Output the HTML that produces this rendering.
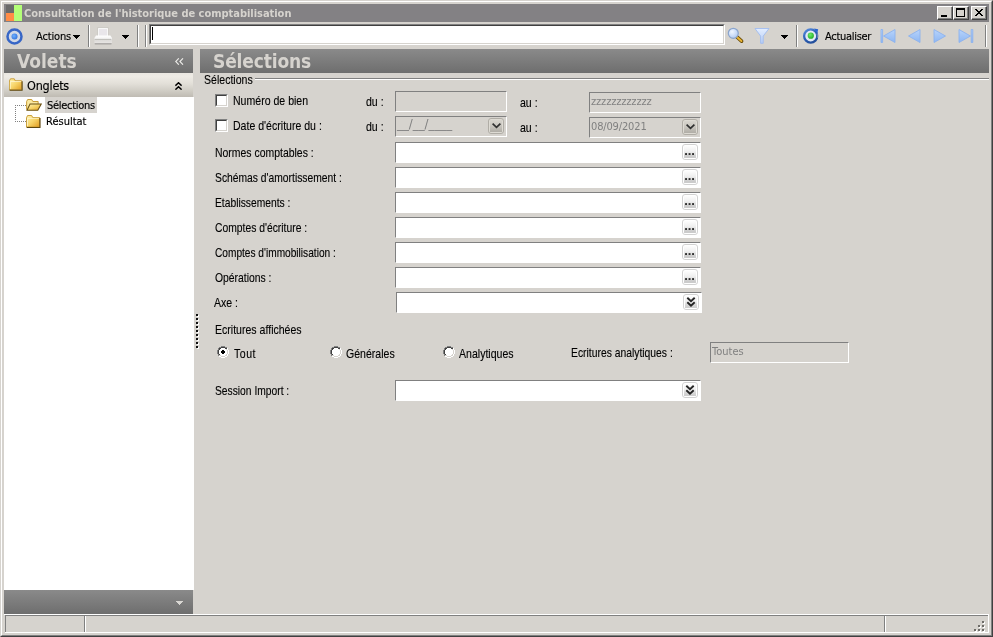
<!DOCTYPE html>
<html lang="fr">
<head>
<meta charset="utf-8">
<title>Consultation de l'historique de comptabilisation</title>
<style>
html,body{margin:0;padding:0;}
body{width:993px;height:637px;overflow:hidden;background:#d6d3ce;position:relative;
  font-family:"Liberation Sans",sans-serif;font-size:11px;color:#000;}
.abs,#win *{position:absolute;box-sizing:border-box;}
#win{will-change:transform;position:absolute;left:0;top:0;width:993px;height:637px;overflow:hidden;background:#d6d3ce;}
.tah{font-family:"DejaVu Sans Condensed","DejaVu Sans","Liberation Sans",sans-serif;}
.t{white-space:nowrap;line-height:13px;height:13px;}
.lbl{white-space:nowrap;line-height:14px;height:14px;font-size:12.4px;transform-origin:0 0;transform:scaleX(var(--sx,0.852));}
.sep{width:2px;border-left:1px solid #808080;border-right:1px solid #fff;}
.box{border:1px solid;border-color:#808080 #fff #fff #808080;background:#fff;}
.box.dis{background:#d6d3ce;}
.gray{color:#808080;}
.k{-webkit-text-stroke:0.15px #000;}
.lbl{-webkit-text-stroke:0.12px #000;}
.chk{width:13px;height:13px;background:#fff;border:1px solid;border-color:#808080 #fff #fff #808080;}
.chk i{left:0;top:0;width:11px;height:11px;border:1px solid;border-color:#404040 #d6d3ce #d6d3ce #404040;}
.wb{width:16px;height:14px;background:#d6d3ce;border:1px solid;border-color:#fff #404040 #404040 #fff;box-shadow:inset -1px -1px 0 #808080;}
</style>
</head>
<body>
<div id="win">
<svg width="0" height="0" style="left:0;top:0;">
<defs>
<linearGradient id="gb" x1="0" y1="0" x2="0" y2="1"><stop offset="0" stop-color="#fdfdfd"/><stop offset="0.45" stop-color="#efefef"/><stop offset="0.75" stop-color="#d6d6d6"/><stop offset="1" stop-color="#cdcdcd"/></linearGradient>
<linearGradient id="gd" x1="0" y1="0" x2="0" y2="1"><stop offset="0" stop-color="#d8d5ce"/><stop offset="0.5" stop-color="#c8c5be"/><stop offset="1" stop-color="#b0ada6"/></linearGradient>
<linearGradient id="gf" x1="0" y1="0" x2="1" y2="1"><stop offset="0" stop-color="#fff3b4"/><stop offset="0.5" stop-color="#f7d468"/><stop offset="1" stop-color="#e09c22"/></linearGradient>
<symbol id="bdots" viewBox="0 0 16 16"><rect x="0.5" y="0.5" width="15" height="15" rx="2.5" fill="#fff" stroke="#d2d2d2"/><rect x="2" y="2" width="12" height="12" fill="url(#gb)"/><rect x="3.1" y="9.1" width="1.9" height="1.9" fill="#2e2e2e"/><rect x="6.6" y="9.1" width="1.9" height="1.9" fill="#2e2e2e"/><rect x="10.1" y="9.1" width="1.9" height="1.9" fill="#2e2e2e"/><rect x="2.5" y="11.5" width="11" height="2" fill="#c6c6c6" opacity="0.6"/></symbol>
<symbol id="bdbl" viewBox="0 0 16 16"><rect x="0.5" y="0.5" width="15" height="15" rx="2.5" fill="#fff" stroke="#d2d2d2"/><rect x="2" y="2" width="12" height="12" fill="url(#gb)"/><path d="M4.3 3.8L8 7.3L11.7 3.8M4.3 8.3L8 11.8L11.7 8.3" fill="none" stroke="#242424" stroke-width="1.9"/></symbol>
<symbol id="bchev" viewBox="0 0 16 16"><rect x="0.5" y="0.5" width="15" height="15" rx="2.5" fill="#dedbd4" stroke="#b0ada6"/><rect x="2" y="2" width="12" height="12" fill="url(#gd)"/><path d="M4.6 5.6L8.5 9.4L12.4 5.6" fill="none" stroke="#303030" stroke-width="1.7"/></symbol>
<symbol id="fclosed" viewBox="0 0 16 14"><path d="M0.5 13v-10.2l1.2-2.3h4.3l1.2 2.3h7.3v10.2z" fill="url(#gf)" stroke="#c39428"/><path d="M15 3.2v10.3h-14.3" fill="none" stroke="#5e4710" stroke-width="1.2"/><path d="M1.5 3.6h12.5M1.5 3.6v8.5" stroke="#fffbe0" stroke-width="0.9" fill="none" opacity="0.9"/></symbol>
<symbol id="fopen" viewBox="0 0 17 13"><path d="M0.5 11.5v-8.8l1.2-2.2h4.3l1.2 2.2h5.8v2.6" fill="#fbe9a0" stroke="#c39428"/><path d="M0.9 12.2L4.2 5.5h12.1L12.6 12.2z" fill="url(#gf)" stroke="#6a5012" stroke-width="1.1"/></symbol>
<symbol id="radio" viewBox="0 0 12 12"><path fill="#808080" d="M4 0h4v1h-4zM2 1h2v1h-2zM8 1h2v1h-2zM1 2h1v1h-1zM1 3h1v1h-1zM0 4h1v1h-1zM0 5h1v1h-1zM0 6h1v1h-1zM0 7h1v1h-1zM1 8h1v1h-1zM1 9h1v1h-1z"/><path fill="#404040" d="M4 1h4v1h-4zM2 2h2v1h-2zM8 2h2v1h-2zM2 3h1v1h-1zM1 4h1v1h-1zM1 5h1v1h-1zM1 6h1v1h-1zM1 7h1v1h-1zM2 8h1v1h-1z"/><path fill="#fff" d="M4 2h4v1h-4zM3 3h6v1h-6zM2 4h8v1h-8zM2 5h8v1h-8zM2 6h8v1h-8zM2 7h8v1h-8zM3 8h6v1h-6zM4 9h4v1h-4z"/><path fill="#fff" d="M10 2h1v1h-1zM10 3h1v1h-1zM11 4h1v1h-1zM11 5h1v1h-1zM11 6h1v1h-1zM11 7h1v1h-1zM10 8h1v1h-1zM10 9h1v1h-1zM2 10h2v1h-2zM8 10h2v1h-2zM4 11h4v1h-4z"/><path fill="#d6d3ce" d="M9 3h1v1h-1zM10 4h1v1h-1zM10 5h1v1h-1zM10 6h1v1h-1zM10 7h1v1h-1zM9 8h1v1h-1zM2 9h2v1h-2zM8 9h2v1h-2zM4 10h4v1h-4z"/></symbol>
<symbol id="rdot" viewBox="0 0 12 12"><path fill="#000" d="M5 4h2v1h1v2h-1v1h-2v-1h-1v-2h1z"/></symbol>
</defs></svg>
<!-- window frame -->
<div style="left:0;top:0;width:993px;height:637px;border:1px solid;border-color:#d6d3ce #404040 #404040 #d6d3ce;"></div>
<div style="left:1px;top:1px;width:991px;height:635px;border:1px solid;border-color:#fff #808080 #808080 #fff;"></div>

<!-- title bar -->
<div id="title" style="left:4px;top:4px;width:985px;height:18px;background:#838184;"></div>
<div style="left:6px;top:5px;width:8px;height:8px;background:#6a6a6a;"></div>
<div style="left:6px;top:13px;width:8px;height:8px;background:#ff8c46;"></div>
<div style="left:14px;top:5px;width:8px;height:16px;background:#b4ff78;"></div>
<div class="t tah" style="left:24px;top:7px;font-weight:bold;font-size:11px;letter-spacing:-0.03px;color:#d6d3ce;">Consultation de l'historique de comptabilisation</div>

<!-- window buttons -->
<div class="wb" style="left:937px;top:6px;"><b style="left:3px;top:8px;width:6px;height:2px;background:#000;"></b></div>
<div class="wb" style="left:953px;top:6px;"><b style="left:2px;top:1px;width:9px;height:9px;border:1px solid #000;border-top-width:2px;"></b></div>
<div class="wb" style="left:971px;top:6px;"><svg style="left:3px;top:2px;" width="8" height="7" viewBox="0 0 8 7" shape-rendering="crispEdges"><path d="M0 0h2v1h1v1h2v-1h1v-1h2v1h-1v1h-1v1h-1v1h1v1h1v1h1v1h-2v-1h-1v-1h-2v1h-1v1h-2v-1h1v-1h1v-1h1v-1h-1v-1h-1v-1h-1z" fill="#000"/></svg></div>

<!-- toolbar -->
<div id="toolbar" style="left:4px;top:23px;width:985px;height:26px;background:#d6d3ce;"></div>
<svg style="left:6px;top:28px;" width="17" height="17" viewBox="0 0 17 17">
  <defs><radialGradient id="g1" cx="0.4" cy="0.4" r="0.7"><stop offset="0" stop-color="#6fb0ff"/><stop offset="1" stop-color="#2f6fd8"/></radialGradient></defs>
  <circle cx="8.5" cy="8.5" r="7" fill="#d2d9e6" stroke="#3766c6" stroke-width="2.5"/>
  <circle cx="8.5" cy="8.5" r="3" fill="url(#g1)"/>
</svg>
<div class="t tah k" style="left:36px;top:30px;letter-spacing:-0.15px;">Actions</div>
<svg class="arr" style="left:73px;top:35px;" width="7" height="4" viewBox="0 0 7 4" shape-rendering="crispEdges"><path d="M0 0h7v1h-1v1h-1v1h-1v1h-1v-1h-1v-1h-1v-1h-1z" fill="#000"/></svg>
<div class="sep" style="left:88px;top:25px;height:22px;"></div>
<!-- printer (disabled) -->
<svg style="left:93px;top:27px;" width="20" height="18" viewBox="0 0 20 18">
  <defs><linearGradient id="gp" x1="0" y1="0" x2="0" y2="1"><stop offset="0" stop-color="#ffffff"/><stop offset="0.45" stop-color="#f1f0ef"/><stop offset="0.6" stop-color="#dddbd9"/><stop offset="0.85" stop-color="#e6e4e2"/><stop offset="1" stop-color="#b9b7b4"/></linearGradient></defs>
  <rect x="5.5" y="1.5" width="9" height="8" fill="#e9e6ea" stroke="#fbfbfb"/>
  <path d="M4.6 9.5v-8.9h10.8v8.9" fill="none" stroke="#c9c6c2" stroke-width="0.7"/>
  <path d="M3 8.5h14.4l1.6 2.5v5.2q0 0.8-0.8 0.8h-16q-0.8 0-0.8-0.8v-5.2z" fill="url(#gp)"/>
  <path d="M1.6 12.4h16.8" stroke="#b4b2af" stroke-width="0.9"/>
  <path d="M1.8 16.9h16.6" stroke="#9c9a97" stroke-width="1"/>
</svg>
<svg class="arr" style="left:122px;top:35px;" width="7" height="4" viewBox="0 0 7 4" shape-rendering="crispEdges"><path d="M0 0h7v1h-1v1h-1v1h-1v1h-1v-1h-1v-1h-1v-1h-1z" fill="#000"/></svg>
<div class="sep" style="left:137px;top:25px;height:22px;"></div>
<div class="sep" style="left:145px;top:25px;height:22px;"></div>
<!-- search input -->
<div style="left:149px;top:24px;width:576px;height:21px;border:1px solid;border-color:#808080 #fff #fff #808080;background:#fff;"></div>
<div style="left:150px;top:25px;width:574px;height:19px;border:1px solid;border-color:#404040 #d6d3ce #d6d3ce #404040;"></div>
<div style="left:152px;top:27px;width:1px;height:13px;background:#000;"></div>
<!-- magnifier -->
<svg style="left:726px;top:26px;" width="20" height="20" viewBox="0 0 20 20">
  <defs><radialGradient id="g2" cx="0.38" cy="0.35" r="0.8"><stop offset="0" stop-color="#f0f6ff"/><stop offset="0.6" stop-color="#c4d8f8"/><stop offset="1" stop-color="#a4bce8"/></radialGradient>
  <linearGradient id="g6" x1="0" y1="0" x2="0" y2="1"><stop offset="0" stop-color="#e4eeff"/><stop offset="1" stop-color="#b4ccf6"/></linearGradient></defs>
  <path d="M11.2 11.2L15.6 15.2" stroke="#6a4c08" stroke-width="3.6" stroke-linecap="round"/>
  <path d="M11.2 11.2L15.4 15" stroke="#e8b434" stroke-width="1.9" stroke-linecap="round"/>
  <circle cx="7.3" cy="7.3" r="5" fill="url(#g2)" stroke="#8aa4cc" stroke-width="1.2"/>
</svg>
<!-- filter -->
<svg style="left:754px;top:27px;" width="16" height="17" viewBox="0 0 16 17">
  <path d="M1 1.5h14l-5.8 7.6v7.2h-2.6v-7.2z" fill="url(#g6)" stroke="#a0bcf0" stroke-width="0.9" stroke-linejoin="round"/>
</svg>
<svg class="arr" style="left:781px;top:35px;" width="7" height="4" viewBox="0 0 7 4" shape-rendering="crispEdges"><path d="M0 0h7v1h-1v1h-1v1h-1v1h-1v-1h-1v-1h-1v-1h-1z" fill="#000"/></svg>
<div class="sep" style="left:796px;top:25px;height:22px;"></div>
<!-- refresh -->
<svg style="left:802px;top:27px;" width="18" height="18" viewBox="0 0 18 18">
  <defs><radialGradient id="g3" cx="0.4" cy="0.35" r="0.7"><stop offset="0" stop-color="#6fe86f"/><stop offset="1" stop-color="#1fae1f"/></radialGradient>
  <linearGradient id="g5" x1="0" y1="0" x2="0.6" y2="1"><stop offset="0" stop-color="#5a8fe0"/><stop offset="0.5" stop-color="#2e62b8"/><stop offset="1" stop-color="#234f9c"/></linearGradient></defs>
  <circle cx="8.7" cy="9" r="6.6" fill="#e2e9f5" stroke="url(#g5)" stroke-width="2.3"/>
  <path d="M15.4 6.4a7 7 0 0 1 0.6 4.6" stroke="#d6d3ce" stroke-width="2.4" fill="none" opacity="0.35"/>
  <path d="M12 1.4L16.2 2.2L15.3 6.2z" fill="#2a64d0"/>
  <circle cx="8.8" cy="8.7" r="3.1" fill="url(#g3)"/>
</svg>
<div class="t tah k" style="left:825px;top:30px;letter-spacing:-0.3px;">Actualiser</div>
<!-- nav arrows (disabled) -->
<svg style="left:880px;top:28px;" width="96" height="16" viewBox="0 0 96 16">
  <defs><linearGradient id="g4" x1="0" y1="0" x2="0" y2="1"><stop offset="0" stop-color="#b8d4fb"/><stop offset="1" stop-color="#8db6f2"/></linearGradient></defs>
  <g fill="url(#g4)" stroke="#8cb2ee" stroke-width="0.9" stroke-linejoin="round">
    <rect x="1" y="1.5" width="1.6" height="13" />
    <path d="M15 1.5v13L3.5 8z"/>
    <path d="M40 1.5v13L28.5 8z"/>
    <path d="M54 1.5v13L65.5 8z"/>
    <path d="M79 1.5v13L90.5 8z"/>
    <rect x="91.2" y="1.5" width="1.6" height="13"/>
  </g>
</svg>
<div class="sep" style="left:985px;top:25px;height:22px;"></div>

<!-- left panel -->
<div id="lhead" style="left:4px;top:49px;width:189px;height:24px;background:linear-gradient(#8a8a8a,#6e6e6e);"></div>
<div class="t tah" style="left:17px;top:50px;height:22px;line-height:22px;font-weight:bold;font-size:19px;color:#d6d3ce;">Volets</div>
<div id="lsub" style="left:4px;top:73px;width:189px;height:24px;background:linear-gradient(#eae7e1 0%,#eeebe5 15%,#e2dfd8 45%,#cfccc4 75%,#bfbbb3 100%);"></div>
<div class="t tah k" style="left:27px;top:78px;font-size:12.5px;letter-spacing:-0.2px;height:15px;line-height:15px;">Onglets</div>
<div id="ltree" style="left:4px;top:97px;width:190px;height:493px;background:#fff;"></div>
<div style="left:45px;top:97px;width:52px;height:16px;background:#d6d3ce;"></div>
<div class="t tah k" style="left:47px;top:99px;letter-spacing:-0.3px;">Sélections</div>
<div class="t tah k" style="left:46px;top:115px;">Résultat</div>
<div id="lfoot" style="left:4px;top:590px;width:189px;height:24px;background:linear-gradient(#8a8a8a,#6e6e6e);"></div>

<svg style="left:9px;top:78px;" width="14" height="13"><use href="#fclosed" width="14" height="13"/></svg>
<svg style="left:175px;top:82px;" width="7" height="8" viewBox="0 0 7 8"><path d="M0.4 3.6L3.5 0.8L6.6 3.6M0.4 7.6L3.5 4.8L6.6 7.6" fill="none" stroke="#000" stroke-width="1.5"/></svg>
<svg style="left:175px;top:58px;" width="9" height="7" viewBox="0 0 9 7"><path d="M3.8 0.3L0.7 3.5L3.8 6.7M8 0.3L4.9 3.5L8 6.7" fill="none" stroke="#ecebe8" stroke-width="1.1"/></svg>
<div style="left:15px;top:105px;width:1px;height:17px;background:repeating-linear-gradient(#808080 0,#808080 1px,transparent 1px,transparent 2px);"></div>
<div style="left:15px;top:105px;width:11px;height:1px;background:repeating-linear-gradient(90deg,#808080 0,#808080 1px,transparent 1px,transparent 2px);"></div>
<div style="left:15px;top:121px;width:11px;height:1px;background:repeating-linear-gradient(90deg,#808080 0,#808080 1px,transparent 1px,transparent 2px);"></div>
<svg style="left:26px;top:99px;" width="16" height="12"><use href="#fopen" width="16" height="12"/></svg>
<svg style="left:26px;top:115px;" width="15" height="13"><use href="#fclosed" width="15" height="13"/></svg>
<svg style="left:176px;top:601px;" width="7" height="4" viewBox="0 0 7 4" shape-rendering="crispEdges"><path d="M0 0h7v1h-1v1h-1v1h-1v1h-1v-1h-1v-1h-1v-1h-1z" fill="#d8d6d2"/></svg>

<!-- right header -->
<div id="rhead" style="left:200px;top:49px;width:789px;height:24px;background:linear-gradient(#8a8a8a,#6e6e6e);"></div>
<div class="t tah" style="left:213px;top:50px;height:22px;line-height:22px;font-weight:bold;font-size:19px;letter-spacing:-0.15px;color:#d6d3ce;">Sélections</div>

<!-- groupbox -->
<div class="lbl" style="left:204px;top:73px;">Sélections</div>
<div style="left:255px;top:78px;width:734px;height:2px;border-top:1px solid #808080;border-bottom:1px solid #fff;"></div>

<!-- row 1 -->
<div class="chk" style="left:215px;top:94px;"><i></i></div>
<div class="lbl" style="left:233px;top:94px;">Numéro de bien</div>
<div class="lbl" style="left:366px;top:95px;">du :</div>
<div class="box dis" style="left:395px;top:91px;width:112px;height:21px;"></div>
<div class="lbl" style="left:520px;top:96px;">au :</div>
<div class="box dis" style="left:589px;top:92px;width:112px;height:21px;"></div>
<div class="t tah gray" style="left:591px;top:95px;letter-spacing:-0.15px;">zzzzzzzzzzzz</div>
<!-- row 2 -->
<div class="chk" style="left:215px;top:119px;"><i></i></div>
<div class="lbl" style="left:233px;top:119px;">Date d'écriture du :</div>
<div class="lbl" style="left:366px;top:120px;">du :</div>
<div class="box dis" style="left:395px;top:116px;width:112px;height:21px;"></div>
<div class="t gray" style="left:397px;top:118px;font-family:'DejaVu Sans','Liberation Sans',sans-serif;font-size:11.8px;">__/__/____</div>
<svg style="left:488px;top:118px;" width="16" height="16"><use href="#bchev"/></svg>
<div class="lbl" style="left:520px;top:121px;">au :</div>
<div class="box dis" style="left:589px;top:117px;width:112px;height:21px;"></div>
<div class="t tah gray" style="left:591px;top:120px;letter-spacing:-0.15px;">08/09/2021</div>
<svg style="left:682px;top:119px;" width="16" height="16"><use href="#bchev"/></svg>
<!-- rows 3-8 -->
<div class="lbl" style="left:215px;top:146px;--sx:0.843;">Normes comptables :</div>
<div class="box" style="left:395px;top:142px;width:306px;height:21px;"></div>
<svg style="left:682px;top:144px;" width="16" height="16"><use href="#bdots"/></svg>
<div class="lbl" style="left:215px;top:171px;--sx:0.832;">Schémas d'amortissement :</div>
<div class="box" style="left:395px;top:167px;width:306px;height:21px;"></div>
<svg style="left:682px;top:169px;" width="16" height="16"><use href="#bdots"/></svg>
<div class="lbl" style="left:215px;top:196px;--sx:0.830;">Etablissements :</div>
<div class="box" style="left:395px;top:192px;width:306px;height:21px;"></div>
<svg style="left:682px;top:194px;" width="16" height="16"><use href="#bdots"/></svg>
<div class="lbl" style="left:215px;top:221px;--sx:0.834;">Comptes d'écriture :</div>
<div class="box" style="left:395px;top:217px;width:306px;height:21px;"></div>
<svg style="left:682px;top:219px;" width="16" height="16"><use href="#bdots"/></svg>
<div class="lbl" style="left:215px;top:246px;--sx:0.818;">Comptes d'immobilisation :</div>
<div class="box" style="left:395px;top:242px;width:306px;height:21px;"></div>
<svg style="left:682px;top:244px;" width="16" height="16"><use href="#bdots"/></svg>
<div class="lbl" style="left:215px;top:271px;--sx:0.837;">Opérations :</div>
<div class="box" style="left:395px;top:267px;width:306px;height:21px;"></div>
<svg style="left:682px;top:269px;" width="16" height="16"><use href="#bdots"/></svg>
<div class="lbl" style="left:214px;top:296px;">Axe :</div>
<div class="box" style="left:396px;top:292px;width:306px;height:21px;"></div>
<svg style="left:683px;top:294px;" width="16" height="16"><use href="#bdbl"/></svg>
<!-- splitter grip -->
<svg id="grip" style="left:196px;top:314px;" width="3" height="36" viewBox="0 0 3 36" shape-rendering="crispEdges"><rect x="1" y="1" width="2" height="2" fill="#fff"/><rect x="0" y="0" width="2" height="2" fill="#101010"/><rect x="1" y="5" width="2" height="2" fill="#fff"/><rect x="0" y="4" width="2" height="2" fill="#101010"/><rect x="1" y="9" width="2" height="2" fill="#fff"/><rect x="0" y="8" width="2" height="2" fill="#101010"/><rect x="1" y="13" width="2" height="2" fill="#fff"/><rect x="0" y="12" width="2" height="2" fill="#101010"/><rect x="1" y="17" width="2" height="2" fill="#fff"/><rect x="0" y="16" width="2" height="2" fill="#101010"/><rect x="1" y="21" width="2" height="2" fill="#fff"/><rect x="0" y="20" width="2" height="2" fill="#101010"/><rect x="1" y="25" width="2" height="2" fill="#fff"/><rect x="0" y="24" width="2" height="2" fill="#101010"/><rect x="1" y="29" width="2" height="2" fill="#fff"/><rect x="0" y="28" width="2" height="2" fill="#101010"/><rect x="1" y="33" width="2" height="2" fill="#fff"/><rect x="0" y="32" width="2" height="2" fill="#101010"/></svg>
<!-- ecritures -->
<div class="lbl" style="left:215px;top:323px;">Ecritures affichées</div>
<svg style="left:217px;top:346px;" width="12" height="12" shape-rendering="crispEdges"><use href="#radio"/><use href="#rdot"/></svg>
<div class="lbl" style="left:234px;top:347px;letter-spacing:0.6px;">Tout</div>
<svg style="left:330px;top:346px;" width="12" height="12" shape-rendering="crispEdges"><use href="#radio"/></svg>
<div class="lbl" style="left:346px;top:347px;">Générales</div>
<svg style="left:443px;top:346px;" width="12" height="12" shape-rendering="crispEdges"><use href="#radio"/></svg>
<div class="lbl" style="left:459px;top:347px;">Analytiques</div>
<div class="lbl" style="left:571px;top:346px;--sx:0.835;">Ecritures analytiques :</div>
<div class="box dis" style="left:710px;top:342px;width:139px;height:21px;"></div>
<div class="t tah gray" style="left:712px;top:345px;">Toutes</div>
<div class="lbl" style="left:215px;top:384px;--sx:0.829;">Session Import :</div>
<div class="box" style="left:395px;top:380px;width:306px;height:21px;"></div>
<svg style="left:682px;top:382px;" width="16" height="16"><use href="#bdbl"/></svg>

<!-- status bar -->
<div style="left:4px;top:614px;width:985px;height:1px;background:#fff;"></div>
<div style="left:5px;top:615px;width:983px;height:1px;background:#808080;"></div>
<div style="left:5px;top:615px;width:1px;height:17px;background:#808080;"></div>
<div style="left:5px;top:632px;width:984px;height:1px;background:#fff;"></div>
<div style="left:988px;top:615px;width:1px;height:18px;background:#fff;"></div>
<div class="sep" style="left:84px;top:616px;height:16px;"></div>
<div class="sep" style="left:884px;top:616px;height:16px;"></div>
<svg style="left:974px;top:621px;" width="11" height="11" viewBox="0 0 11 11" shape-rendering="crispEdges">
<g fill="#fff"><rect x="9" y="1" width="2" height="2"/><rect x="5" y="5" width="2" height="2"/><rect x="9" y="5" width="2" height="2"/><rect x="1" y="9" width="2" height="2"/><rect x="5" y="9" width="2" height="2"/><rect x="9" y="9" width="2" height="2"/></g>
<g fill="#6e6c68"><rect x="8" y="0" width="2" height="2"/><rect x="4" y="4" width="2" height="2"/><rect x="8" y="4" width="2" height="2"/><rect x="0" y="8" width="2" height="2"/><rect x="4" y="8" width="2" height="2"/><rect x="8" y="8" width="2" height="2"/></g>
</svg>
</div>
</body>
</html>
